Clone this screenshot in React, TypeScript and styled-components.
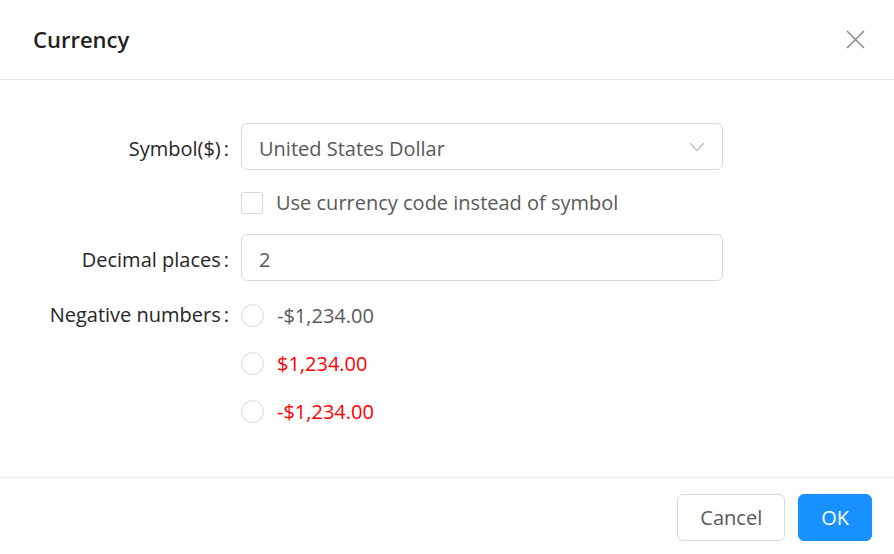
import React from 'react';
import styled, { createGlobalStyle } from 'styled-components';

const GlobalStyle = createGlobalStyle`
  html, body {
    margin: 0;
    padding: 0;
    background: #fff;
  }
  body {
    font-family: 'Open Sans', 'Noto Sans', sans-serif;
  }
  * { box-sizing: border-box; }
`;

const Modal = styled.div`
  width: 894px;
  height: 554px;
  display: flex;
  flex-direction: column;
  background: #fff;
`;

const Header = styled.div`
  height: 80px;
  flex: none;
  display: flex;
  align-items: center;
  justify-content: space-between;
  padding: 0 28px 1px 33px;
  border-bottom: 1px solid #ebebeb;
`;

const Title = styled.div`
  font-size: 22px;
  font-weight: 600;
  color: #1f1f1f;
`;

const CloseButton = styled.button`
  border: 0;
  background: none;
  padding: 0;
  width: 22px;
  height: 22px;
  display: flex;
  align-items: center;
  justify-content: center;
  cursor: pointer;
`;

const Body = styled.div`
  flex: 1;
  padding-top: 43px;
`;

const Form = styled.div`
  display: grid;
  grid-template-columns: 229px 482px;
  column-gap: 12px;
  align-items: center;
`;

const Label = styled.div<{ $top?: number }>`
  justify-self: end;
  align-self: ${(p) => (p.$top ? 'start' : 'center')};
  margin-top: ${(p) => p.$top || 0}px;
  padding-top: 3px;
  font-size: 20px;
  color: #262626;
  white-space: nowrap;
  &::after {
    content: ':';
    margin-left: 3px;
  }
`;

const Field = styled.div<{ $col?: number }>`
  grid-column: ${(p) => p.$col || 'auto'};
`;

const Box = styled.div`
  height: 47px;
  border: 1px solid #d9d9d9;
  border-radius: 6px;
  display: flex;
  align-items: center;
  justify-content: space-between;
  padding: 3px 17px 0 17px;
  font-size: 20px;
  color: #595959;

  svg {
    margin-top: -3px;
  }
`;

const CheckRow = styled.label`
  height: 42px;
  margin: 11px 0 11px;
  padding-top: 1px;
  display: flex;
  align-items: center;
  gap: 13px;
  font-size: 20px;
  color: #595959;
`;

const CheckBox = styled.span`
  width: 22px;
  height: 22px;
  border: 1px solid #d9d9d9;
  border-radius: 3px;
  flex: none;
`;

const RadioGroup = styled.div`
  display: flex;
  flex-direction: column;
  margin-top: 10px;
`;

const RadioRow = styled.label<{ $red?: boolean }>`
  height: 48px;
  display: flex;
  align-items: center;
  gap: 13px;
  font-size: 20px;
  color: ${(p) => (p.$red ? '#ff0000' : '#595959')};
`;

const RadioDot = styled.span`
  width: 23px;
  height: 23px;
  border: 1px solid #d9d9d9;
  border-radius: 50%;
  flex: none;
`;

const Footer = styled.div`
  flex: none;
  height: 77px;
  border-top: 1px solid #ebebeb;
  display: flex;
  justify-content: flex-end;
  align-items: flex-start;
  gap: 13px;
  padding: 16px 22px 0 0;
`;

const Button = styled.button<{ $primary?: boolean }>`
  height: 47px;
  padding: 0 22px;
  border-radius: 6px;
  font-family: inherit;
  font-size: 20px;
  border: 1px solid ${(p) => (p.$primary ? '#1890ff' : '#d9d9d9')};
  background: ${(p) => (p.$primary ? '#1890ff' : '#fff')};
  color: ${(p) => (p.$primary ? '#fff' : '#595959')};
  cursor: pointer;
`;

const negatives = [
  { text: '-$1,234.00', red: false },
  { text: '$1,234.00', red: true },
  { text: '-$1,234.00', red: true },
];

export default function App() {
  return (
    <Modal>
      <GlobalStyle />
      <Header>
        <Title>Currency</Title>
        <CloseButton aria-label="Close">
          <svg width="19" height="19" viewBox="0 0 19 19">
            <path d="M1 1 L18 18 M18 1 L1 18" stroke="#8c8c8c" strokeWidth="1.6" fill="none" />
          </svg>
        </CloseButton>
      </Header>
      <Body>
        <Form>
          <Label>Symbol($)</Label>
          <Field>
            <Box>
              <span>United States Dollar</span>
              <svg width="16" height="10" viewBox="0 0 16 10">
                <path d="M1 1 L8 8.5 L15 1" stroke="#bfbfbf" strokeWidth="1.3" fill="none" />
              </svg>
            </Box>
          </Field>
          <Field $col={2}>
            <CheckRow>
              <CheckBox />
              Use currency code instead of symbol
            </CheckRow>
          </Field>
          <Label>Decimal places</Label>
          <Field>
            <Box>2</Box>
          </Field>
          <Label $top={17}>Negative numbers</Label>
          <Field>
            <RadioGroup>
              {negatives.map((n, i) => (
                <RadioRow key={i} $red={n.red}>
                  <RadioDot />
                  {n.text}
                </RadioRow>
              ))}
            </RadioGroup>
          </Field>
        </Form>
      </Body>
      <Footer>
        <Button>Cancel</Button>
        <Button $primary>OK</Button>
      </Footer>
    </Modal>
  );
}
